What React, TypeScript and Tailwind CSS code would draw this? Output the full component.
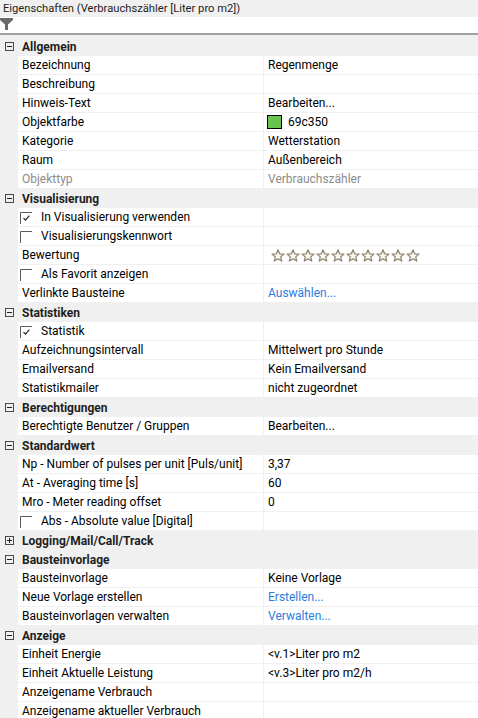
import React from "react";

type Row =
  | { kind: "group"; label: string; open: boolean }
  | {
      kind: "item";
      label: string;
      value?: string;
      check?: boolean;
      tone?: "muted" | "link";
      swatch?: string;
      stars?: boolean;
    };

const rows: Row[] = [
  { kind: "group", label: "Allgemein", open: true },
  { kind: "item", label: "Bezeichnung", value: "Regenmenge" },
  { kind: "item", label: "Beschreibung" },
  { kind: "item", label: "Hinweis-Text", value: "Bearbeiten..." },
  { kind: "item", label: "Objektfarbe", value: "69c350", swatch: "#69c350" },
  { kind: "item", label: "Kategorie", value: "Wetterstation" },
  { kind: "item", label: "Raum", value: "Außenbereich" },
  { kind: "item", label: "Objekttyp", value: "Verbrauchszähler", tone: "muted" },
  { kind: "group", label: "Visualisierung", open: true },
  { kind: "item", label: "In Visualisierung verwenden", check: true },
  { kind: "item", label: "Visualisierungskennwort", check: false },
  { kind: "item", label: "Bewertung", stars: true },
  { kind: "item", label: "Als Favorit anzeigen", check: false },
  { kind: "item", label: "Verlinkte Bausteine", value: "Auswählen...", tone: "link" },
  { kind: "group", label: "Statistiken", open: true },
  { kind: "item", label: "Statistik", check: true },
  { kind: "item", label: "Aufzeichnungsintervall", value: "Mittelwert pro Stunde" },
  { kind: "item", label: "Emailversand", value: "Kein Emailversand" },
  { kind: "item", label: "Statistikmailer", value: "nicht zugeordnet" },
  { kind: "group", label: "Berechtigungen", open: true },
  { kind: "item", label: "Berechtigte Benutzer / Gruppen", value: "Bearbeiten..." },
  { kind: "group", label: "Standardwert", open: true },
  { kind: "item", label: "Np - Number of pulses per unit [Puls/unit]", value: "3,37" },
  { kind: "item", label: "At - Averaging time [s]", value: "60" },
  { kind: "item", label: "Mro - Meter reading offset", value: "0" },
  { kind: "item", label: "Abs - Absolute value [Digital]", check: false },
  { kind: "group", label: "Logging/Mail/Call/Track", open: false },
  { kind: "group", label: "Bausteinvorlage", open: true },
  { kind: "item", label: "Bausteinvorlage", value: "Keine Vorlage" },
  { kind: "item", label: "Neue Vorlage erstellen", value: "Erstellen...", tone: "link" },
  { kind: "item", label: "Bausteinvorlagen verwalten", value: "Verwalten...", tone: "link" },
  { kind: "group", label: "Anzeige", open: true },
  { kind: "item", label: "Einheit Energie", value: "<v.1>Liter pro m2" },
  { kind: "item", label: "Einheit Aktuelle Leistung", value: "<v.3>Liter pro m2/h" },
  { kind: "item", label: "Anzeigename Verbrauch" },
  { kind: "item", label: "Anzeigename aktueller Verbrauch" },
];

const FilterIcon = () => (
  <svg width="13" height="12" viewBox="0 0 13 12">
    <path d="M0 0h13v2L8 6.5V12H5V6.5L0 2z" fill="#6a6a6a" />
  </svg>
);

const ToggleBox = ({ open }: { open: boolean }) => (
  <svg width="9" height="9" viewBox="0 0 9 9" className="block">
    <rect x="0.5" y="0.5" width="8" height="8" fill="none" stroke="#4a4a4a" />
    <path d="M2 4.5h5" stroke="#222" />
    {!open && <path d="M4.5 2v5" stroke="#222" />}
  </svg>
);

const CheckBox = ({ checked }: { checked: boolean }) => (
  <svg width="12" height="12" viewBox="0 0 12 12" className="block">
    <path d="M0.5 12V0.5H12" fill="none" stroke="#5a5a5a" />
    {checked && <path d="M3.5 6.2l2 2 3.8-4.6" fill="none" stroke="#222" strokeWidth="1.2" />}
  </svg>
);

const Star = () => (
  <svg width="14" height="13" viewBox="0 0 14 13" className="block">
    <path
      d="M7 0.8l1.8 3.9 4.2.4-3.2 2.8 1 4.2L7 9.9 3.2 12.1l1-4.2L1 5.1l4.2-.4z"
      fill="#e6e1d3"
      stroke="#8b826f"
      strokeWidth="1.1"
      strokeLinejoin="round"
    />
    <path d="M7 4l.9 2 2.1.2-1.6 1.4.5 2.1L7 8.6 5.1 9.7l.5-2.1L4 6.2l2.1-.2z" fill="#fbfaf6" />
  </svg>
);

function GroupRow({ label, open }: { label: string; open: boolean }) {
  return (
    <div className="flex h-[19px] items-center bg-[#f0f0f0]">
      <div className="flex w-[18px] justify-center pl-[1px]">
        <ToggleBox open={open} />
      </div>
      <span className="pl-[4px] font-bold text-[#1e1e1e]">{label}</span>
    </div>
  );
}

function ItemRow({ row }: { row: Extract<Row, { kind: "item" }> }) {
  const valueColor =
    row.tone === "muted" ? "text-[#8c8c8c]" : row.tone === "link" ? "text-[#2a7ce0]" : "text-black";
  return (
    <div className="flex h-[19px] bg-[#f0f0f0]">
      <div className="w-[18px] shrink-0" />
      <div className="flex h-[18px] w-[245px] shrink-0 items-center bg-white">
        {row.check !== undefined ? (
          <>
            <div className="ml-[2px] mt-[1px]">
              <CheckBox checked={row.check} />
            </div>
            <span className="pl-[9px] text-black">{row.label}</span>
          </>
        ) : (
          <span className={`pl-[4px] ${row.tone === "muted" ? "text-[#8c8c8c]" : "text-black"}`}>
            {row.label}
          </span>
        )}
      </div>
      <div className="w-[1px] shrink-0" />
      <div className="flex h-[18px] flex-1 items-center bg-white pl-[4px]">
        {row.swatch && (
          <span
            className="mr-[6px] ml-[-1px] inline-block h-[14px] w-[15px] border border-black"
            style={{ backgroundColor: row.swatch }}
          />
        )}
        {row.stars ? (
          <div className="flex gap-[1px] pl-[3px]">
            {Array.from({ length: 10 }).map((_, i) => (
              <Star key={i} />
            ))}
          </div>
        ) : (
          row.value && <span className={valueColor}>{row.value}</span>
        )}
      </div>
    </div>
  );
}

export default function App() {
  return (
    <div
      className="h-[718px] w-[478px] overflow-hidden bg-[#f0f0f0] text-[12px] leading-none"
      style={{ fontFamily: 'Roboto, "Noto Sans", sans-serif' }}
    >
      {/* Panel title */}
      <div className="flex h-[17px] items-center pl-[3px] text-[11.2px] text-[#1e1e1e]">
        Eigenschaften (Verbrauchszähler [Liter pro m2])
      </div>

      {/* Toolbar with filter */}
      <div className="flex h-[18px] items-start border-b-2 border-[#a0a0a0] bg-white pt-[1px]">
        <FilterIcon />
      </div>

      {/* Property grid */}
      <div className="pt-[2px]">
        {rows.map((row, i) =>
          row.kind === "group" ? (
            <GroupRow key={i} label={row.label} open={row.open} />
          ) : (
            <ItemRow key={i} row={row} />
          )
        )}
      </div>
    </div>
  );
}
